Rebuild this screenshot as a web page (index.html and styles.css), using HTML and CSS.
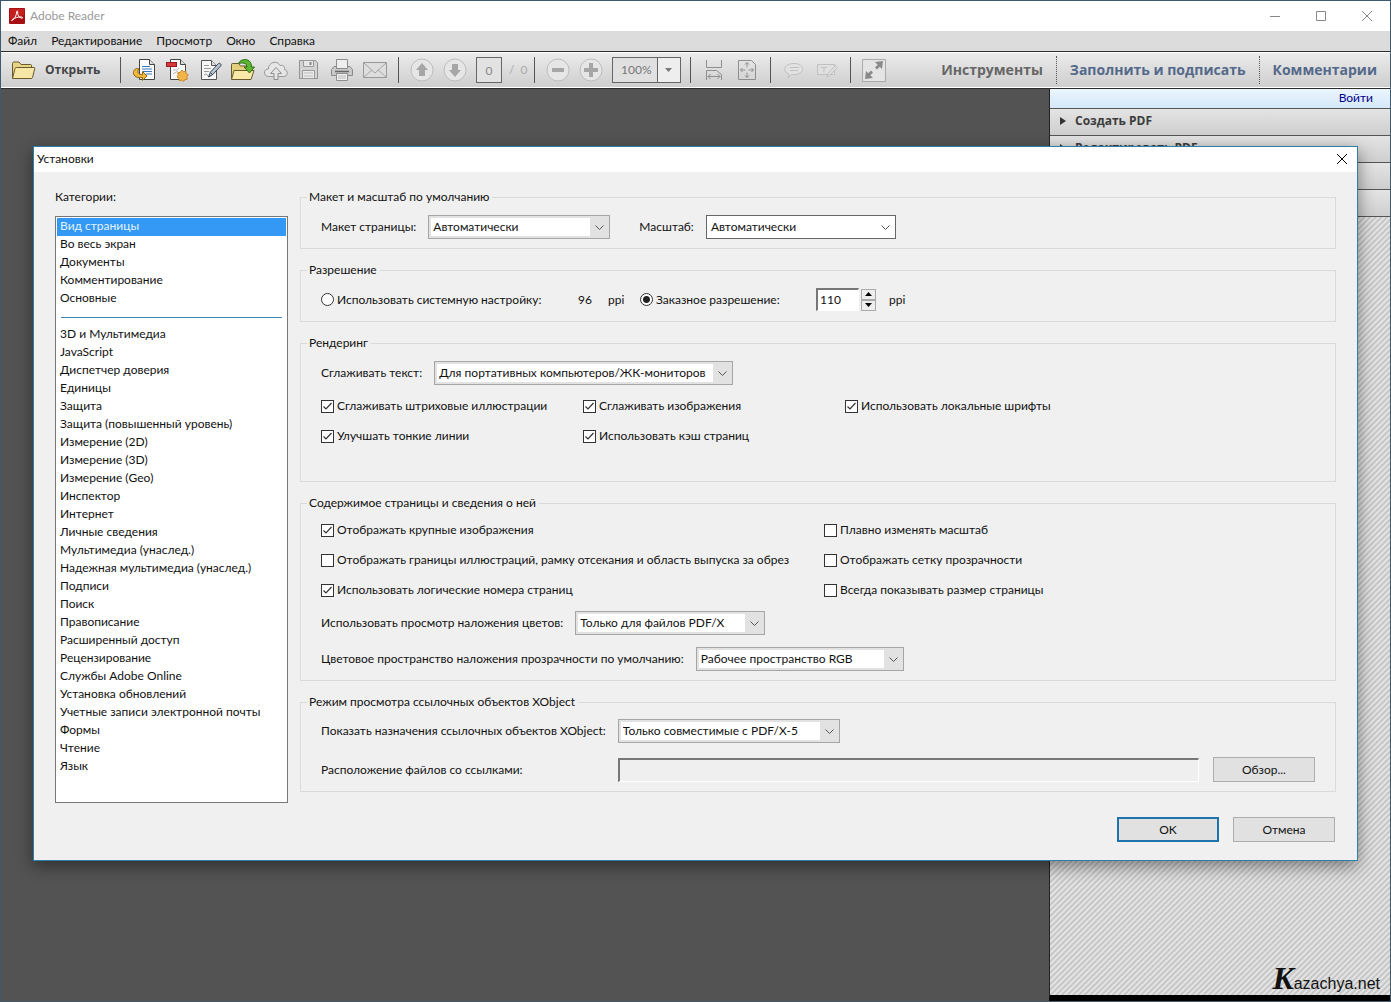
FILE: index.html
```html
<!DOCTYPE html>
<html lang="ru">
<head>
<meta charset="utf-8">
<title>Adobe Reader</title>
<link rel="stylesheet" href="styles.css">
</head>
<body>
<div class="app">
  <header class="titlebar">
    <svg class="logo" width="16" height="16" viewBox="0 0 16 16"><rect width="16" height="16" rx="1" fill="#a80f12"/><path d="M1 1h14v6L1 12z" fill="#c4201d"/><path d="M3 12.500c2-1 4.500-4.500 4.700-9 .1-1 1.200-.8 1 .3C8.200 7.500 10.500 10 13 10.200c1 0 .8-1.200-.5-1.300-3-.2-7 1-9.200 2.700-1 .9-.8 1.200-.3.900z" fill="none" stroke="#fff" stroke-width="1"/></svg>
    <span class="app-name">Adobe Reader</span>
    <div class="window-buttons">
      <button aria-label="Свернуть"><svg width="12" height="12"><path d="M1 6.500h10" stroke="#888"/></svg></button>
      <button aria-label="Развернуть"><svg width="12" height="12"><path d="M1.500 1.500h9v9h-9z" stroke="#888" fill="none"/></svg></button>
      <button aria-label="Закрыть"><svg width="12" height="12"><path d="M1 1l10 10M11 1L1 11" stroke="#888"/></svg></button>
    </div>
  </header>
  <nav class="menubar">
    <button>Файл</button><button>Редактирование</button><button>Просмотр</button><button>Окно</button><button>Справка</button>
  </nav>
  <div class="toolbar">
    <button class="open">
      <svg width="26" height="22" viewBox="0 0 26 22"><path d="M2.500 19V4.500q0-1.500 1.500-1.500h5l2 2.500h9.500q1 0 1 1V9" fill="#e9d488" stroke="#6b5a2c"/><path d="M2.500 19.500L5 9.500q.3-1 1.300-1H24q1 0 .8 1l-2.300 9q-.3 1-1.300 1z" fill="#f7e7a6" stroke="#6b5a2c"/></svg>
      <span>Открыть</span>
    </button>
    <i class="sep"></i>
    <button class="tool" aria-label="Конвертировать"><svg width="24" height="24" viewBox="0 0 24 24"><path d="M7.500 1.500h10l5 5v15h-15z" fill="#fdfdfd" stroke="#444"/><path d="M17.500 1.500v5h5" fill="#ddd" stroke="#444"/><path d="M10 8.500h8M10 11h10M11 13.500h9M14 16h6" stroke="#3a78c0" stroke-width="1.200"/><path d="M4.500 10.500C.5 12 .5 17 4 18.800c2 1 4 1 6.500.7v3l4.500-4.500-4.500-4.500v3c-4 .3-6-2-3.500-5.500z" fill="#f2b83d" stroke="#8e6415"/></svg></button>
    <button class="tool" aria-label="Создать PDF"><svg width="24" height="24" viewBox="0 0 24 24"><path d="M5.500 1.500h10l5 5v15h-15z" fill="#f8f8f8" stroke="#444"/><path d="M15.500 1.500v5h5" fill="#ddd" stroke="#444"/><path d="M8 12q4 1 6-2M8 16l5-3" stroke="#bbb" fill="none"/><rect x="1.500" y="4.500" width="10" height="4" fill="#d6373b" stroke="#9c1b20"/><path d="M17 12l1.500 1.700 2.400-.5.200 2.400 2.100 1.300-1.400 2 .6 2.300-2.400.4-1.400 1.900-2-1.300-2.300.6-.4-2.400-1.900-1.400 1.300-2-.5-2.300 2.400-.4z" fill="#f3b54a" stroke="#c98a2a"/></svg></button>
    <button class="tool" aria-label="Подписать"><svg width="24" height="24" viewBox="0 0 24 24"><path d="M3.500 2.500h10l5 5v14h-15z" fill="#f7f7f7" stroke="#555"/><path d="M13.500 2.500v5h5" fill="#ddd" stroke="#555"/><path d="M6 7.500h5M6 10.500h7M6 13.500h5M6 17q2-2 3 0t4 1" stroke="#999" fill="none"/><path d="M10.500 19l2-5 8-8.500q1-.6 2 .3t.3 2l-8 8.700z" fill="#b9c5d4" stroke="#374453"/><path d="M13 15l2 2" stroke="#374453"/></svg></button>
    <button class="tool" aria-label="Открыть файл"><svg width="26" height="24" viewBox="0 0 26 24"><path d="M1.500 21V6.500q0-1 1-1h6l2 2.500h10v4" fill="#e4cf7b" stroke="#6b5a2c"/><path d="M1.500 21.500L4 12.500h20l-3 9z" fill="#f8e9a9" stroke="#6b5a2c"/><path d="M8.500 5.500C10 1 18 0 20.500 4.500c1 2 1 3 .8 4.500h3.200l-5 6-5.500-6h3c0-3-2-5-8.500-3.500z" fill="#5fb52f" stroke="#2f6e15"/></svg></button>
    <button class="tool" aria-label="Облако"><svg width="26" height="24" viewBox="0 0 26 24"><path d="M6 18.500C0 18.500 0 11 5.500 11 5 4.500 14 1.500 17 7.500c4-1 5 2 4.500 4 4 1 3.500 7-1 7z" fill="#e6e6e6" stroke="#999"/><path d="M13 9.500l5.500 6H15v6h-4v-6H7.500z" fill="#e4e4e4" stroke="#8e8e8e"/></svg></button>
    <button class="tool" aria-label="Сохранить"><svg width="24" height="24" viewBox="0 0 24 24"><path d="M2.500 2.500h16l2 2v16h-18z" fill="#d3d3d3" stroke="#939393"/><path d="M6.500 2.500h10v6h-10z" fill="#e7e7e7" stroke="#999"/><path d="M13.500 4v3" stroke="#888" stroke-width="2"/><path d="M5.500 12.500h12v8h-12z" fill="#ebebeb" stroke="#999"/><path d="M7 15h9M7 18h9" stroke="#bbb"/></svg></button>
    <button class="tool" aria-label="Печать"><svg width="24" height="24" viewBox="0 0 24 24"><path d="M6.500 1.500h11v9h-11z" fill="#eee" stroke="#8e8e8e"/><path d="M4 8.500h2.500v2h11v-2H20l2.500 3v6H1.500v-6z" fill="#c9c9c9" stroke="#8a8a8a"/><path d="M5 13.500h14" stroke="#666" stroke-width="1.500"/><path d="M6.500 15.500h11v7h-11z" fill="#f0f0f0" stroke="#8e8e8e"/><path d="M8 18h8M8 20h8" stroke="#bbb"/></svg></button>
    <button class="tool" aria-label="Почта"><svg width="26" height="24" viewBox="0 0 26 24"><path d="M1.500 4.500h23v15h-23z" fill="#dedede" stroke="#999"/><path d="M2 5l11 10L24 5M2 19l8-7M24 19l-8-7" stroke="#a5a5a5" fill="none"/></svg></button>
    <i class="sep"></i>
    <button class="tool" aria-label="Предыдущая страница"><svg width="24" height="24" viewBox="0 0 24 24"><circle cx="12" cy="12" r="11" fill="#e6e6e6" stroke="#bdbdbd"/><path d="M12 5l6 7h-3v6H9v-6H6z" fill="#a6a6a6"/></svg></button>
    <button class="tool" aria-label="Следующая страница"><svg width="24" height="24" viewBox="0 0 24 24"><circle cx="12" cy="12" r="11" fill="#e6e6e6" stroke="#bdbdbd"/><path d="M12 19l6-7h-3V6H9v6H6z" fill="#a6a6a6"/></svg></button>
    <input class="page" value="0" aria-label="Страница">
    <span class="pages">/&nbsp; 0</span>
    <i class="sep"></i>
    <button class="tool" aria-label="Уменьшить"><svg width="24" height="24" viewBox="0 0 24 24"><circle cx="12" cy="12" r="11" fill="#e6e6e6" stroke="#bdbdbd"/><path d="M6 10h12v4H6z" fill="#a6a6a6"/></svg></button>
    <button class="tool" aria-label="Увеличить"><svg width="24" height="24" viewBox="0 0 24 24"><circle cx="12" cy="12" r="11" fill="#e6e6e6" stroke="#bdbdbd"/><path d="M10 5h4v5h5v4h-5v5h-4v-5H5v-4h5z" fill="#a6a6a6"/></svg></button>
    <select class="zoom" aria-label="Масштаб страницы"><option>100%</option></select>
    <i class="sep"></i>
    <button class="tool" aria-label="По ширине"><svg width="24" height="24" viewBox="0 0 24 24" fill="none" stroke="#8e8e8e"><path d="M4.500 2v7.500h15V2M4.500 22v-9.500h10l5 4V22M6 18.500h12M8.500 16L6 18.500 8.500 21M15.500 16l2.500 2.500-2.500 2.500"/></svg></button>
    <button class="tool" aria-label="Страница целиком"><svg width="24" height="24" viewBox="0 0 24 24" fill="none" stroke="#8e8e8e"><path d="M3.500 2.500h13l4 4v15h-17zM12 4.500v5M10 6.500l2-2 2 2M12 14.500v5M10 17.500l2 2 2-2M5.500 12h5M7.500 10l-2 2 2 2M13.500 12h5M16.500 10l2 2-2 2"/></svg></button>
    <i class="sep"></i>
    <button class="tool" aria-label="Комментарий"><svg width="24" height="24" viewBox="0 0 24 24" fill="#e2e2e2" stroke="#c0c0c0"><path d="M6 20l1-4C0 14 2 5.500 12 5.500s12 9 2 11q-3 .3-5 0z"/><path d="M8 9.500h9M8 12.500h8"/></svg></button>
    <button class="tool" aria-label="Выделение"><svg width="24" height="24" viewBox="0 0 24 24" fill="#e0e0e0" stroke="#c0c0c0"><path d="M2.500 6.500h17v10h-17z"/><path d="M6 9.500h6M9 9.500v5M12 19l1.500-4 7-7.500 2 2L15 17z"/></svg></button>
    <i class="sep"></i>
    <button class="tool" aria-label="Во весь экран"><svg width="24" height="24" viewBox="0 0 24 24"><path d="M.5 1.500h23v22H.5z" fill="#e4e4e4" stroke="#aaa"/><path d="M13 4l8-1-1 8-2.300-2.300-2.700 2.700-2-2 2.700-2.700zM3 21l1-8 2.300 2.300L9 12.600l2 2-2.700 2.700L11 20z" fill="#8a8a8a"/></svg></button>
    <div class="tabs"><button class="active">Инструменты</button><button>Заполнить и подписать</button><button>Комментарии</button></div>
  </div>
  <main class="workspace">
    <div class="canvas"></div>
    <aside class="side">
      <div class="signin"><a href="#">Войти</a></div>
      <button class="panel">Создать PDF</button>
      <button class="panel">Редактировать PDF</button>
      <div class="panel-blank"></div>
      <div class="panel-blank"></div>
      <div class="hatch"><div class="watermark"><b>K</b>azachya.net</div></div>
    </aside>
  </main>

  <section class="dialog" role="dialog" aria-labelledby="dlg-title">
    <header class="dialog-title"><span id="dlg-title">Установки</span><button aria-label="Закрыть окно"><svg width="12" height="12"><path d="M1 1l10 10M11 1L1 11" stroke="#000"/></svg></button></header>
    <div class="dialog-body">
      <div class="categories">
        <label for="cats">Категории:</label>
        <select id="cats" size="32">
          <option selected>Вид страницы</option><option>Во весь экран</option><option>Документы</option><option>Комментирование</option><option>Основные</option>
          <option disabled class="divider"></option>
          <option>3D и Мультимедиа</option><option>JavaScript</option><option>Диспетчер доверия</option><option>Единицы</option><option>Защита</option><option>Защита (повышенный уровень)</option><option>Измерение (2D)</option><option>Измерение (3D)</option><option>Измерение (Geo)</option><option>Инспектор</option><option>Интернет</option><option>Личные сведения</option><option>Мультимедиа (унаслед.)</option><option>Надежная мультимедиа (унаслед.)</option><option>Подписи</option><option>Поиск</option><option>Правописание</option><option>Расширенный доступ</option><option>Рецензирование</option><option>Службы Adobe Online</option><option>Установка обновлений</option><option>Учетные записи электронной почты</option><option>Формы</option><option>Чтение</option><option>Язык</option>
        </select>
      </div>
      <form class="settings">
        <fieldset>
          <legend>Макет и масштаб по умолчанию</legend>
          <div class="row">
            <label for="layout">Макет страницы:</label>
            <select id="layout" class="combo w-layout"><option>Автоматически</option></select>
            <label for="scale" class="spaced">Масштаб:</label>
            <select id="scale" class="combo plain w-scale"><option>Автоматически</option></select>
          </div>
        </fieldset>
        <fieldset>
          <legend>Разрешение</legend>
          <div class="row resolution">
            <label class="check system"><input type="radio" name="res">Использовать системную настройку:</label>
            <span class="value">96</span><span class="unit">ppi</span>
            <label class="check custom"><input type="radio" name="res" checked>Заказное разрешение:</label>
            <input class="number" value="110" aria-label="Разрешение">
            <span class="spinner"><button type="button" aria-label="Больше"><svg width="7" height="4"><path d="M0 4l3.500-4L7 4z"/></svg></button><button type="button" aria-label="Меньше"><svg width="7" height="4"><path d="M0 0l3.500 4L7 0z"/></svg></button></span>
            <span>ppi</span>
          </div>
        </fieldset>
        <fieldset class="rendering">
          <legend>Рендеринг</legend>
          <div class="row">
            <label for="smooth">Сглаживать текст:</label>
            <select id="smooth" class="combo w-smooth"><option>Для портативных компьютеров/ЖК-мониторов</option></select>
          </div>
          <div class="checks three">
            <label class="check"><input type="checkbox" checked>Сглаживать штриховые иллюстрации</label>
            <label class="check"><input type="checkbox" checked>Сглаживать изображения</label>
            <label class="check"><input type="checkbox" checked>Использовать локальные шрифты</label>
            <label class="check"><input type="checkbox" checked>Улучшать тонкие линии</label>
            <label class="check"><input type="checkbox" checked>Использовать кэш страниц</label>
          </div>
        </fieldset>
        <fieldset class="content">
          <legend>Содержимое страницы и сведения о ней</legend>
          <div class="checks two">
            <label class="check"><input type="checkbox" checked>Отображать крупные изображения</label>
            <label class="check"><input type="checkbox">Плавно изменять масштаб</label>
            <label class="check"><input type="checkbox">Отображать границы иллюстраций, рамку отсекания и область выпуска за обрез</label>
            <label class="check"><input type="checkbox">Отображать сетку прозрачности</label>
            <label class="check"><input type="checkbox" checked>Использовать логические номера страниц</label>
            <label class="check"><input type="checkbox">Всегда показывать размер страницы</label>
          </div>
          <div class="row">
            <label for="overprint">Использовать просмотр наложения цветов:</label>
            <select id="overprint" class="combo w-overprint"><option>Только для файлов PDF/X</option></select>
          </div>
          <div class="row next">
            <label for="space">Цветовое пространство наложения прозрачности по умолчанию:</label>
            <select id="space" class="combo w-space"><option>Рабочее пространство RGB</option></select>
          </div>
        </fieldset>
        <fieldset>
          <legend>Режим просмотра ссылочных объектов XObject</legend>
          <div class="xobject">
            <label for="targets">Показать назначения ссылочных объектов XObject:</label>
            <select id="targets" class="combo w-targets"><option>Только совместимые с PDF/X-5</option></select>
            <label for="location">Расположение файлов со ссылками:</label>
            <div class="path"><input id="location" type="text"><button type="button" class="btn">Обзор...</button></div>
          </div>
        </fieldset>
      </form>
    </div>
    <footer class="dialog-footer"><button class="btn default">OK</button><button class="btn">Отмена</button></footer>
  </section>
</div>
</body>
</html>
```
FILE: styles.css
```css
* { box-sizing: border-box; }
body { margin: 0; font: 12px/16px Lato, "Open Sans", sans-serif; color: #111; }
button, input, select { font: inherit; color: inherit; margin: 0; }
button { padding: 0; border: 0; background: none; }
svg { display: block; }

.app { position: relative; display: flex; flex-direction: column; min-height: 100vh; border: 1px solid #3f5a6e; }
.titlebar { display: flex; align-items: center; height: 30px; padding-left: 8px; background: #fff; }
.app-name { margin-left: 5px; color: #999; }
.window-buttons { display: flex; margin-left: auto; }
.window-buttons button { display: grid; place-items: center; width: 46px; height: 30px; }

.menubar { display: flex; gap: 14px; height: 20px; padding-left: 7px; background: #dcdcdc; }

.toolbar { display: flex; align-items: center; height: 38px; border: solid #2c2c2c; border-width: 1px 0; background: linear-gradient(#ececec, #cdcdcd); box-shadow: inset 0 1px #fff, inset 0 -1px #fff; }
.open { display: flex; align-items: center; gap: 9px; width: 112px; padding-left: 9px; font: 700 12px/16px "Open Sans", sans-serif; color: #444; }
.sep { width: 1px; height: 26px; margin: 0 6px 0 7px; background: #555; }
.tool { display: grid; place-items: center; width: 33px; height: 30px; }
.page { width: 26px; height: 26px; margin-left: 5px; padding: 0; border: 1px solid #666; background: #e2e2e2; text-align: center; color: #888; }
.pages { width: 18px; margin-left: 7px; color: #aaa; white-space: nowrap; }
.zoom { appearance: none; width: 69px; height: 26px; margin: 0 2px 0 5px; padding: 0 8px; border: 1px solid #666; border-radius: 0; color: #777;
  background: url("data:image/svg+xml,%3Csvg xmlns='http://www.w3.org/2000/svg' width='23' height='24'%3E%3Cpath d='M0 0h23v24H0z' fill='%23eee'/%3E%3Cpath d='M.5 0v24' stroke='%23666'/%3E%3Cpath d='M8 10h7l-3.500 4z' fill='%23777'/%3E%3C/svg%3E") right no-repeat #e0e0e0; }
.tabs { display: flex; margin-left: auto; font: 700 14px/20px "Open Sans", sans-serif; }
.tabs button { height: 28px; padding: 0 13px; color: #54698a; }
.tabs button + button { border-left: 1px dotted #555; }
.tabs .active { color: #666; }

.workspace { flex: 1; display: flex; background: #535353; }
.canvas { flex: 1; }
.side { display: flex; flex-direction: column; width: 341px; border-left: 1px solid #222; border-bottom: 6px solid #000; }
.signin { height: 19px; padding-right: 17px; text-align: right; line-height: 18px; background: linear-gradient(#ebf5fe, #d5e8f9); }
.signin a { color: #00008b; text-decoration: none; }
.panel, .panel-blank { height: 27px; border-top: 1px solid #555; background: linear-gradient(#e4e4e4, #cecece); }
.panel { display: flex; align-items: center; gap: 9px; padding: 0 0 2px 10px; font: 700 12px/16px "Open Sans", sans-serif; color: #3c3c3c; }
.panel::before { content: ""; border: solid transparent; border-width: 4px 0 4px 6px; border-left-color: #333; }
.hatch { flex: 1; display: flex; align-items: flex-end; justify-content: flex-end; border-top: 1px solid #555; background: repeating-linear-gradient(135deg, #e4e4e4 0 1px, #c6c6c6 2px 3px, #e4e4e4 4px); }
.watermark { padding-right: 10px; font: 16px/22px "Liberation Sans", sans-serif; color: #111; }
.watermark b { font: italic 700 32px/20px "Liberation Serif", serif; }

.dialog { position: absolute; top: 145px; left: 32px; right: 32px; border: 1px solid #2b7fa8; background: #f0f0f0; box-shadow: 0 5px 16px rgba(0, 0, 0, .45); }
.dialog-title { display: flex; align-items: center; justify-content: space-between; height: 25px; padding: 0 9px 1px 3px; background: #fff; }
.dialog-body { display: flex; gap: 12px; padding: 17px 21px 0; }
.categories { display: flex; flex-direction: column; width: 233px; }
.categories select { flex: 1; margin-top: 11px; margin-bottom: -11px; padding: 1px; border: 1px solid #777; border-radius: 0; background: #fff; overflow: hidden; outline: 0; }
.categories option { height: 18px; min-height: 18px; padding: 0 3px; line-height: 18px; }
.categories option:checked { background: linear-gradient(#3399f5, #3399f5); -webkit-text-fill-color: #e4f2ff; }
.categories .divider { background: linear-gradient(#3c86b0, #3c86b0) 4px 9px / calc(100% - 8px) 1px no-repeat; }

.settings { flex: 1; display: flex; flex-direction: column; gap: 13px; }
fieldset { min-width: 0; margin: 0; padding: 9px 20px; border: 1px solid #dadada; }
legend { height: 16px; margin-left: -14px; padding: 0 3px 0 2px; }
.row { display: flex; align-items: center; gap: 12px; height: 25px; }
.spaced { margin-left: 17px; }
.combo { appearance: none; height: 24px; padding: 0 4px; border: 1px solid #a5a5a5; border-radius: 0;
  background: url("data:image/svg+xml,%3Csvg xmlns='http://www.w3.org/2000/svg' width='18' height='22'%3E%3Cpath d='M4.500 9.500l4 4 4-4' fill='none' stroke='%23555'/%3E%3C/svg%3E") right no-repeat, linear-gradient(#fff, #fff) 2px 2px / calc(100% - 21px) calc(100% - 4px) no-repeat #e2e2e2; }
.combo.plain { border-color: #666; background-color: #fff; }
.w-layout { width: 182px; }
.w-scale { width: 190px; }
.w-smooth { width: 299px; }
.w-overprint { width: 190px; }
.w-space { width: 208px; }
.w-targets { width: 222px; }

.check { display: flex; align-items: center; gap: 3px; height: 30px; white-space: nowrap; }
.check input { appearance: none; flex: none; width: 13px; height: 13px; border: 1px solid #333; background: #fff; }
.check input[type=checkbox]:checked { background: url("data:image/svg+xml,%3Csvg xmlns='http://www.w3.org/2000/svg' width='11' height='11'%3E%3Cpath d='M1.500 5.500l2.500 2.500 5.500-6' fill='none' stroke='%23333' stroke-width='1.200'/%3E%3C/svg%3E") center no-repeat #fff; }
.check input[type=radio] { border-radius: 50%; }
.check input[type=radio]:checked { background: radial-gradient(circle, #222 3px, #fff 4px); }
.resolution { gap: 0; }
.system { width: 257px; }
.value { width: 30px; }
.unit { width: 32px; }
.custom { width: 176px; }
.number { width: 43px; height: 23px; padding: 0 2px 2px; border: solid; border-width: 2px 1px 1px 2px; border-color: #777 #fff #fff #777; background: #fff; }
.spinner { display: grid; margin: 0 13px 0 2px; }
.spinner button { display: grid; place-items: center; width: 15px; height: 11px; border: 1px solid #aaa; background: #eee; }

.checks { display: grid; justify-content: start; }
.three { grid-template-columns: 262px 262px auto; padding: 6px 0 21px; }
.two { grid-template-columns: 503px auto; padding-bottom: 6px; }
.content { padding-top: 4px; }
.content .row { height: 24px; }
.content .next { margin-top: 12px; }
.xobject { display: grid; grid-template-columns: auto 1fr; gap: 14px 12px; align-items: center; }
.path { display: flex; align-items: center; gap: 14px; }
.path input { flex: 1; min-width: 0; height: 24px; border: solid; border-width: 2px 1px 1px 2px; border-color: #777 #fff #fff #777; background: #efefef; }
.btn { width: 102px; height: 25px; border: 1px solid #adadad; background: #e1e1e1; }
.btn.default { border: 2px solid #1f73ad; }
.dialog-footer { display: flex; justify-content: flex-end; gap: 14px; padding: 25px 22px 18px; }
```
